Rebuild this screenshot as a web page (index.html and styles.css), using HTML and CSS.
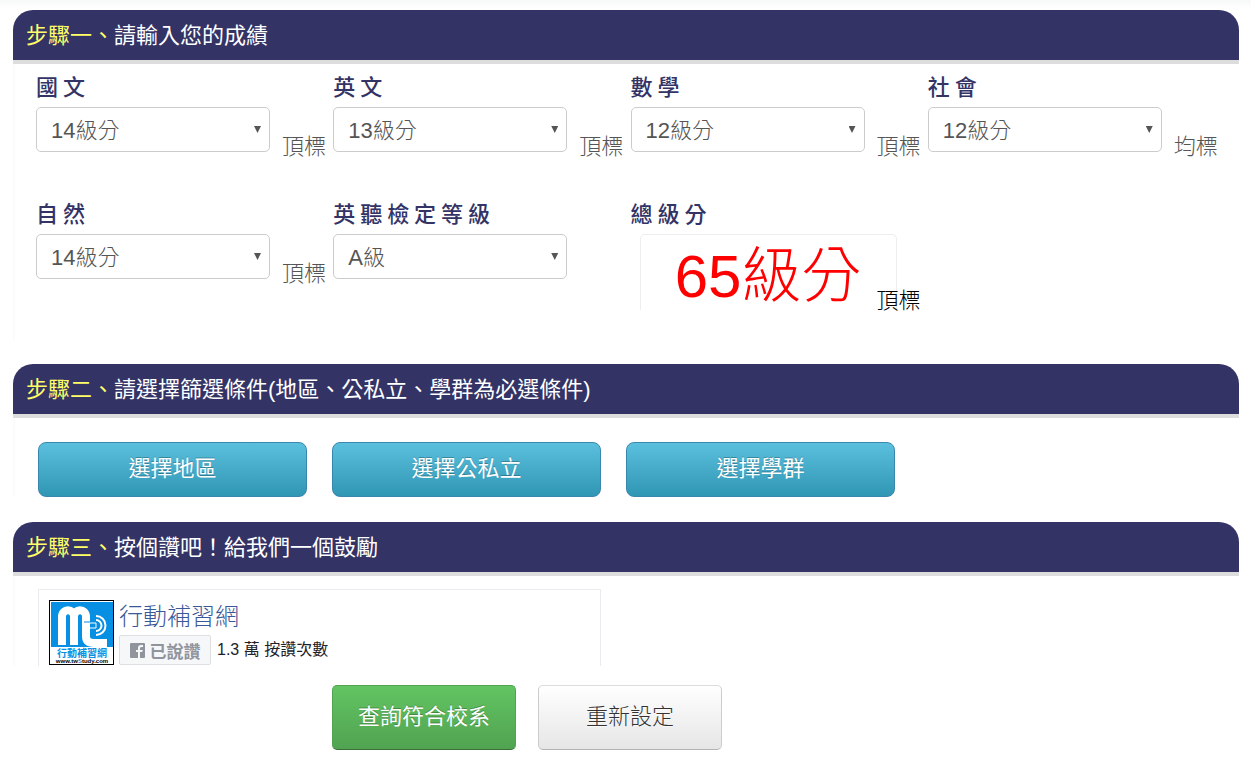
FILE: index.html
```
<!DOCTYPE html>
<html lang="zh-Hant">
<head>
    <meta charset="UTF-8">
    <title>成績落點分析</title>
    <link rel="stylesheet" href="styles.css">
</head>
<body>
    <form class="page">
        <section class="step">
            <h2 class="step-title"><span>步驟一、</span>請輸入您的成績</h2>
            <div class="step-body scores">
                <div class="field">
                    <label for="chinese">國 文</label>
                    <div class="field-row">
                        <div class="select">
                            <select id="chinese"><option>14級分</option></select>
                        </div>
                        <span class="level">頂標</span>
                    </div>
                </div>
                <div class="field">
                    <label for="english">英 文</label>
                    <div class="field-row">
                        <div class="select">
                            <select id="english"><option>13級分</option></select>
                        </div>
                        <span class="level">頂標</span>
                    </div>
                </div>
                <div class="field">
                    <label for="math">數 學</label>
                    <div class="field-row">
                        <div class="select">
                            <select id="math"><option>12級分</option></select>
                        </div>
                        <span class="level">頂標</span>
                    </div>
                </div>
                <div class="field">
                    <label for="social">社 會</label>
                    <div class="field-row">
                        <div class="select">
                            <select id="social"><option>12級分</option></select>
                        </div>
                        <span class="level">均標</span>
                    </div>
                </div>
                <div class="field">
                    <label for="science">自 然</label>
                    <div class="field-row">
                        <div class="select">
                            <select id="science"><option>14級分</option></select>
                        </div>
                        <span class="level">頂標</span>
                    </div>
                </div>
                <div class="field">
                    <label for="listening">英 聽 檢 定 等 級</label>
                    <div class="field-row">
                        <div class="select">
                            <select id="listening"><option>A級</option></select>
                        </div>
                    </div>
                </div>
                <div class="field field-total">
                    <label for="total">總 級 分</label>
                    <div class="field-row">
                        <input type="text" id="total" value="65級分" readonly>
                        <span class="level">頂標</span>
                    </div>
                </div>
            </div>
        </section>

        <section class="step">
            <h2 class="step-title"><span>步驟二、</span>請選擇篩選條件(地區、公私立、學群為必選條件)</h2>
            <div class="step-body filters">
                <button type="button" class="btn btn-info">選擇地區</button>
                <button type="button" class="btn btn-info">選擇公私立</button>
                <button type="button" class="btn btn-info">選擇學群</button>
            </div>
        </section>

        <section class="step">
            <h2 class="step-title"><span>步驟三、</span>按個讚吧！給我們一個鼓勵</h2>
            <div class="step-body like">
                <div class="like-box">
                    <svg class="logo" viewBox="0 0 65 65" role="img" aria-label="行動補習網">
                        <rect width="65" height="65" fill="#000"/>
                        <rect x="1" y="1" width="63" height="63" fill="#fff"/>
                        <rect x="2" y="2" width="62" height="45" fill="#078fe3"/>
                        <path d="M13 45V17C13 8 25 8 25 17V45M25 17C25 8 37 8 37 17V36Q37 43 45 43H58" fill="none" stroke="#fff" stroke-width="8"/>
                        <path d="M35 22H52" fill="none" stroke="#078fe3" stroke-width="1"/>
                        <path d="M41 23H47V28H41" fill="none" stroke="#fff" stroke-width="1"/>
                        <path d="M47 20A5 5 0 0 1 47 31M47 16A9 9 0 0 1 47 35" fill="none" stroke="#fff" stroke-width="2"/>
                        <text x="33" y="57" class="logo-name">行動補習網</text>
                        <text x="33" y="63" class="logo-url">www.tw<tspan fill="#078fe3">S</tspan>tudy.com</text>
                    </svg>
                    <div class="like-info">
                        <a href="#" class="like-name">行動補習網</a>
                        <div class="like-row">
                            <button type="button" class="like-btn">
                                <svg viewBox="0 0 15 15" aria-hidden="true">
                                    <rect width="15" height="15" rx="1" fill="#90949c"/>
                                    <path d="M8 15V9H6V7H8V5Q8 2 11 2H13V4H12Q10 4 10 5V7H13L12 9H10V15Z" fill="#f6f7f9"/>
                                </svg>
                                已說讚
                            </button>
                            <span class="like-count">1.3 萬 按讚次數</span>
                        </div>
                    </div>
                </div>
            </div>
        </section>

        <div class="actions">
            <button type="submit" class="btn btn-success">查詢符合校系</button>
            <button type="reset" class="btn btn-default">重新設定</button>
        </div>
    </form>
</body>
</html>
```

FILE: styles.css
```
* {
    margin: 0;
    padding: 0;
    box-sizing: border-box;
}
body {
    font-family: "Liberation Sans", "Noto Sans CJK TC", sans-serif;
    font-size: 22px;
    font-weight: 300;
    color: #555;
    background: #fff linear-gradient(#f7f8f8, #fff) no-repeat;
    background-size: 100% 8px;
}
button,
input,
select {
    font: inherit;
}
.page {
    padding: 10px 12px 13px 13px;
}
.step-title {
    height: 54px;
    padding-left: 13px;
    line-height: 52px;
    font-size: 22px;
    font-weight: 400;
    color: #fff;
    background: #336;
    border-bottom: 4px solid #ddd;
    border-radius: 20px 20px 0 0;
}
.step-title span {
    color: #ff6;
}
.step-body {
    border-left: 2px solid #fbfbfb;
}

/* scores */
.scores {
    display: grid;
    grid-template-columns: repeat(4, 1fr);
    row-gap: 37px;
    padding: 8px 14px 23px 21px;
    margin-bottom: 25px;
}
.field label {
    display: block;
    height: 35px;
    line-height: 26px;
    font-family: "Noto Sans CJK TC", sans-serif;
    font-weight: 500;
    color: #336;
}
.field-row {
    display: flex;
    align-items: flex-start;
}
.select {
    position: relative;
    width: 234px;
}
.select::after {
    content: "";
    position: absolute;
    top: 19px;
    right: 9px;
    width: 7px;
    height: 7px;
    background: #555;
    clip-path: polygon(0 0, 100% 0, 50% 100%);
    pointer-events: none;
}
.select select {
    display: block;
    width: 100%;
    height: 45px;
    padding: 1px 14px 0;
    color: #555;
    background: #fff;
    border: 1px solid #ccc;
    border-radius: 5px;
    appearance: none;
}
.level {
    padding-left: 12px;
    margin-top: 25px;
    line-height: 30px;
    white-space: nowrap;
}
.field-total input {
    width: 257px;
    height: 76px;
    padding-bottom: 4px;
    margin-left: 9px;
    font-size: 60px;
    text-align: center;
    color: #f00;
    background: none;
    border: 1px solid #eee;
    border-bottom: none;
    border-radius: 5px 5px 0 0;
}
.field-total .level {
    padding-left: 0;
    margin: 52px 0 0 -20px;
    color: #000;
}

/* buttons */
.btn {
    padding-bottom: 8px;
    color: #fff;
    text-shadow: 0 -1px 0 rgba(0, 0, 0, 0.25);
    border: 1px solid;
    border-radius: 5px;
    cursor: pointer;
}
.filters {
    display: flex;
    gap: 25px;
    padding: 24px 0 0 23px;
    margin-bottom: 25px;
}
.btn-info {
    width: 269px;
    height: 55px;
    font-weight: 400;
    background: linear-gradient(#5bc0de, #2f96b4);
    border-color: #3a87ad;
    border-radius: 8px;
}
.btn-success,
.btn-default {
    width: 184px;
    height: 65px;
}
.btn-success {
    font-weight: 400;
    background: linear-gradient(#62c462, #51a351);
    border-color: #51a351 #51a351 #387038;
}
.btn-default {
    color: #333;
    text-shadow: 0 1px 1px rgba(255, 255, 255, 0.75);
    background: linear-gradient(#fff, #e6e6e6);
    border-color: #ddd #ccc #b3b3b3;
}
.actions {
    display: flex;
    gap: 22px;
    padding: 19px 0 0 319px;
}

/* like box */
.like {
    padding: 13px 0 0 23px;
}
.like-box {
    display: flex;
    gap: 5px;
    width: 563px;
    height: 77px;
    padding: 10px 10px 0;
    border: 1px solid #e9ebee;
    border-bottom: none;
}
.logo {
    width: 65px;
    height: 65px;
}
.logo-name {
    font-size: 10px;
    font-weight: 700;
    fill: #078fe3;
    text-anchor: middle;
}
.logo-url {
    font-size: 6px;
    font-weight: 700;
    fill: #000;
    text-anchor: middle;
}
.like-name {
    display: block;
    height: 35px;
    line-height: 34px;
    font-size: 24px;
    color: #3b5998;
    text-decoration: none;
}
.like-row {
    display: flex;
    align-items: center;
    gap: 6px;
}
.like-btn {
    display: flex;
    align-items: center;
    justify-content: center;
    gap: 5px;
    width: 92px;
    height: 30px;
    font-size: 17px;
    font-weight: 700;
    color: #90949c;
    background: #f6f7f9;
    border: 1px solid #dddfe2;
    border-radius: 2px;
}
.like-btn svg {
    width: 15px;
    height: 15px;
}
.like-count {
    padding-bottom: 4px;
    font-size: 16px;
    font-weight: 400;
    color: #1d2129;
}
```
